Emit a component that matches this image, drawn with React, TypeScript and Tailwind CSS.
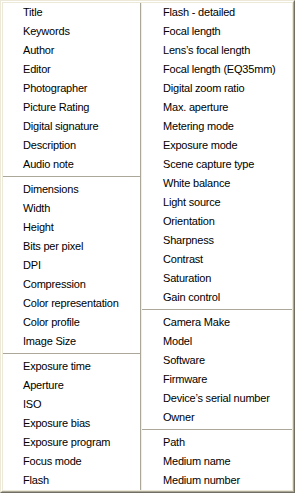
const left: (string | null)[] = [
  "Title",
  "Keywords",
  "Author",
  "Editor",
  "Photographer",
  "Picture Rating",
  "Digital signature",
  "Description",
  "Audio note",
  null,
  "Dimensions",
  "Width",
  "Height",
  "Bits per pixel",
  "DPI",
  "Compression",
  "Color representation",
  "Color profile",
  "Image Size",
  null,
  "Exposure time",
  "Aperture",
  "ISO",
  "Exposure bias",
  "Exposure program",
  "Focus mode",
  "Flash",
];

const right: (string | null)[] = [
  "Flash - detailed",
  "Focal length",
  "Lens\u2019s focal length",
  "Focal length (EQ35mm)",
  "Digital zoom ratio",
  "Max. aperture",
  "Metering mode",
  "Exposure mode",
  "Scene capture type",
  "White balance",
  "Light source",
  "Orientation",
  "Sharpness",
  "Contrast",
  "Saturation",
  "Gain control",
  null,
  "Camera Make",
  "Model",
  "Software",
  "Firmware",
  "Device\u2019s serial number",
  "Owner",
  null,
  "Path",
  "Medium name",
  "Medium number",
];

const MenuColumn = ({ items, pad }: { items: (string | null)[]; pad: string }) => (
  <div className="flex flex-col">
    {items.map((item, i) =>
      item === null ? (
        <div key={i} className="h-[6px] pt-[2px]">
          <div className="h-px bg-[#aca899]" />
          <div className="h-px bg-white" />
        </div>
      ) : (
        <div key={i} className={`h-[19px] flex items-center leading-none ${pad}`}>
          {item}
        </div>
      )
    )}
  </div>
);

export default function App() {
  return (
    <div className="w-[295px] h-[493px] border border-t-[#ece9d8] border-l-[#ece9d8] border-r-[#716f64] border-b-[#716f64]">
      <div className="h-full border border-t-white border-l-white border-r-[#aca899] border-b-[#aca899] bg-[#ece9d8] p-px">
        <div
          className="h-full bg-white flex text-[11px] tracking-[-0.2px] text-black"
          style={{ fontFamily: '"Liberation Sans", Arial, sans-serif' }}
        >
          <div className="w-[137px]">
            <MenuColumn items={left} pad="pl-[20px]" />
          </div>
          <div className="w-px bg-[#aca899]" />
          <div className="w-px bg-[#f1efe2]" />
          <div className="flex-1">
            <MenuColumn items={right} pad="pl-[21px]" />
          </div>
        </div>
      </div>
    </div>
  );
}
